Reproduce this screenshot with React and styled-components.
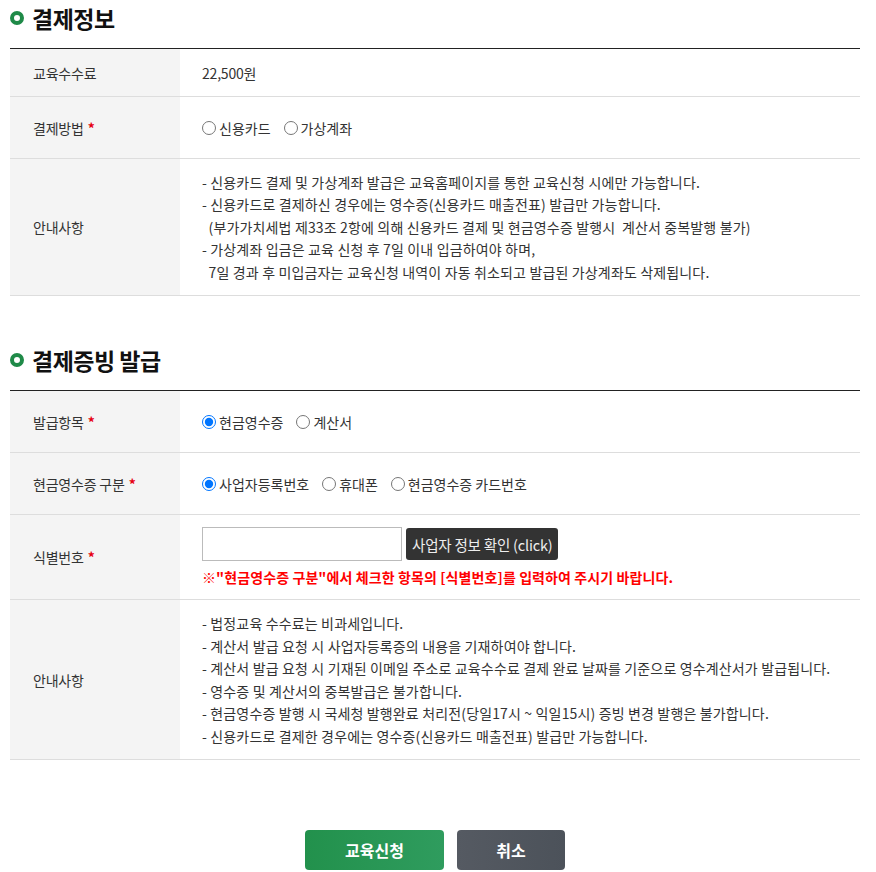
import React from "react";
import styled, { createGlobalStyle } from "styled-components";

const Global = createGlobalStyle`
  *, *::before, *::after { box-sizing: border-box; }
  html, body { margin: 0; padding: 0; background: #fff; }
  body { font-family: "Noto Sans CJK KR", "Noto Sans", sans-serif; color: #333; }
`;

const Page = styled.div`
  width: 860px;
  padding: 0 0 20px 10px;
`;

const Section = styled.section`
  margin-top: ${(p) => p.$top || 0}px;
`;

const Title = styled.h2`
  display: flex;
  align-items: center;
  gap: 8px;
  margin: 0 0 12px;
  height: 36px;
  font-size: 23px;
  font-weight: 700;
  color: #111;
  letter-spacing: -0.5px;
`;

const Bullet = styled.span`
  display: inline-block;
  width: 14px;
  height: 14px;
  border: 4px solid #1f8a48;
  border-radius: 50%;
`;

const Table = styled.div`
  border-top: 1px solid #222;
  display: grid;
  grid-template-columns: 170px 1fr;
`;

const Label = styled.div`
  background: #f4f4f4;
  border-bottom: 1px solid #ddd;
  display: flex;
  align-items: center;
  padding-left: 23px;
  min-height: ${(p) => p.$h}px;
  font-size: 14px;
  letter-spacing: -0.2px;
  color: #333;
`;

const Star = styled.span`
  color: #e60012;
  font-weight: 700;
  margin-left: 4px;
`;

const Cell = styled.div`
  border-bottom: 1px solid #ddd;
  display: flex;
  flex-direction: column;
  justify-content: center;
  padding: ${(p) => p.$pad || "0"} 0 ${(p) => p.$pad || "0"} 22px;
  font-size: 14px;
  letter-spacing: -0.2px;
  color: #333;
`;

const Notes = styled.ul`
  list-style: none;
  margin: 0;
  padding: 0;
  line-height: 22.5px;
  font-size: 14px;
  letter-spacing: 0.15px;
  color: #333;
`;

const RadioRow = styled.div`
  display: flex;
  align-items: center;
  gap: 13px;
`;

const RadioLabel = styled.label`
  display: inline-flex;
  align-items: center;
  gap: 3px;
  font-size: 14px;
  color: #333;
  letter-spacing: 0;
`;

const Radio = styled.input.attrs({ type: "radio" })`
  margin: 0;
  width: 14px;
  height: 14px;
`;

const InputRow = styled.div`
  display: flex;
  align-items: center;
  gap: 4px;
`;

const TextInput = styled.input`
  width: 200px;
  height: 34px;
  border: 1px solid #bbb;
  margin: 0;
`;

const CheckBtn = styled.button`
  height: 32px;
  padding: 0 6px;
  border: 0;
  border-radius: 3px;
  background: #333;
  color: #eee;
  font-family: inherit;
  font-size: 14.5px;
  letter-spacing: -0.2px;
`;

const Warn = styled.p`
  margin: 6px 0 0;
  color: #f00;
  font-size: 14px;
  font-weight: 700;
  letter-spacing: 0.1px;
`;

const Buttons = styled.div`
  margin-top: 70px;
  display: flex;
  justify-content: center;
  gap: 13px;
`;

const Btn = styled.button`
  width: ${(p) => p.$w}px;
  height: 40px;
  border: 0;
  border-radius: 4px;
  color: #fff;
  font-family: inherit;
  font-size: 16px;
  font-weight: 700;
  background: ${(p) =>
    p.$green
      ? "linear-gradient(90deg, #22914c, #2f9c5e)"
      : "linear-gradient(90deg, #555a62, #4c525a)"};
`;

export default function App() {
  return (
    <Page>
      <Global />
      <Section>
        <Title>
          <Bullet />
          결제정보
        </Title>
        <Table>
          <Label $h={48}>교육수수료</Label>
          <Cell>22,500원</Cell>
          <Label $h={62}>
            결제방법<Star>*</Star>
          </Label>
          <Cell>
            <RadioRow>
              <RadioLabel>
                <Radio name="pay" />
                신용카드
              </RadioLabel>
              <RadioLabel>
                <Radio name="pay" />
                가상계좌
              </RadioLabel>
            </RadioRow>
          </Cell>
          <Label $h={137}>안내사항</Label>
          <Cell $pad="11px">
            <Notes>
              <li>- 신용카드 결제 및 가상계좌 발급은 교육홈페이지를 통한 교육신청 시에만 가능합니다.</li>
              <li>- 신용카드로 결제하신 경우에는 영수증(신용카드 매출전표) 발급만 가능합니다.</li>
              <li>&nbsp;&nbsp;(부가가치세법 제33조 2항에 의해 신용카드 결제 및 현금영수증 발행시&nbsp; 계산서 중복발행 불가)</li>
              <li>- 가상계좌 입금은 교육 신청 후 7일 이내 입금하여야 하며,</li>
              <li>&nbsp;&nbsp;7일 경과 후 미입금자는 교육신청 내역이 자동 취소되고 발급된 가상계좌도 삭제됩니다.</li>
            </Notes>
          </Cell>
        </Table>
      </Section>

      <Section $top={46}>
        <Title>
          <Bullet />
          결제증빙 발급
        </Title>
        <Table>
          <Label $h={62}>
            발급항목<Star>*</Star>
          </Label>
          <Cell>
            <RadioRow>
              <RadioLabel>
                <Radio name="kind" defaultChecked />
                현금영수증
              </RadioLabel>
              <RadioLabel>
                <Radio name="kind" />
                계산서
              </RadioLabel>
            </RadioRow>
          </Cell>
          <Label $h={62}>
            현금영수증 구분<Star>*</Star>
          </Label>
          <Cell>
            <RadioRow>
              <RadioLabel>
                <Radio name="type" defaultChecked />
                사업자등록번호
              </RadioLabel>
              <RadioLabel>
                <Radio name="type" />
                휴대폰
              </RadioLabel>
              <RadioLabel>
                <Radio name="type" />
                현금영수증 카드번호
              </RadioLabel>
            </RadioRow>
          </Cell>
          <Label $h={85}>
            식별번호<Star>*</Star>
          </Label>
          <Cell>
            <InputRow>
              <TextInput type="text" />
              <CheckBtn>사업자 정보 확인 (click)</CheckBtn>
            </InputRow>
            <Warn>※"현금영수증 구분"에서 체크한 항목의 [식별번호]를 입력하여 주시기 바랍니다.</Warn>
          </Cell>
          <Label $h={160}>안내사항</Label>
          <Cell $pad="12px">
            <Notes>
              <li>- 법정교육 수수료는 비과세입니다.</li>
              <li>- 계산서 발급 요청 시 사업자등록증의 내용을 기재하여야 합니다.</li>
              <li>- 계산서 발급 요청 시 기재된 이메일 주소로 교육수수료 결제 완료 날짜를 기준으로 영수계산서가 발급됩니다.</li>
              <li>- 영수증 및 계산서의 중복발급은 불가합니다.</li>
              <li>- 현금영수증 발행 시 국세청 발행완료 처리전(당일17시 ~ 익일15시) 증빙 변경 발행은 불가합니다.</li>
              <li>- 신용카드로 결제한 경우에는 영수증(신용카드 매출전표) 발급만 가능합니다.</li>
            </Notes>
          </Cell>
        </Table>
      </Section>

      <Buttons>
        <Btn $green $w={139}>교육신청</Btn>
        <Btn $w={108}>취소</Btn>
      </Buttons>
    </Page>
  );
}
